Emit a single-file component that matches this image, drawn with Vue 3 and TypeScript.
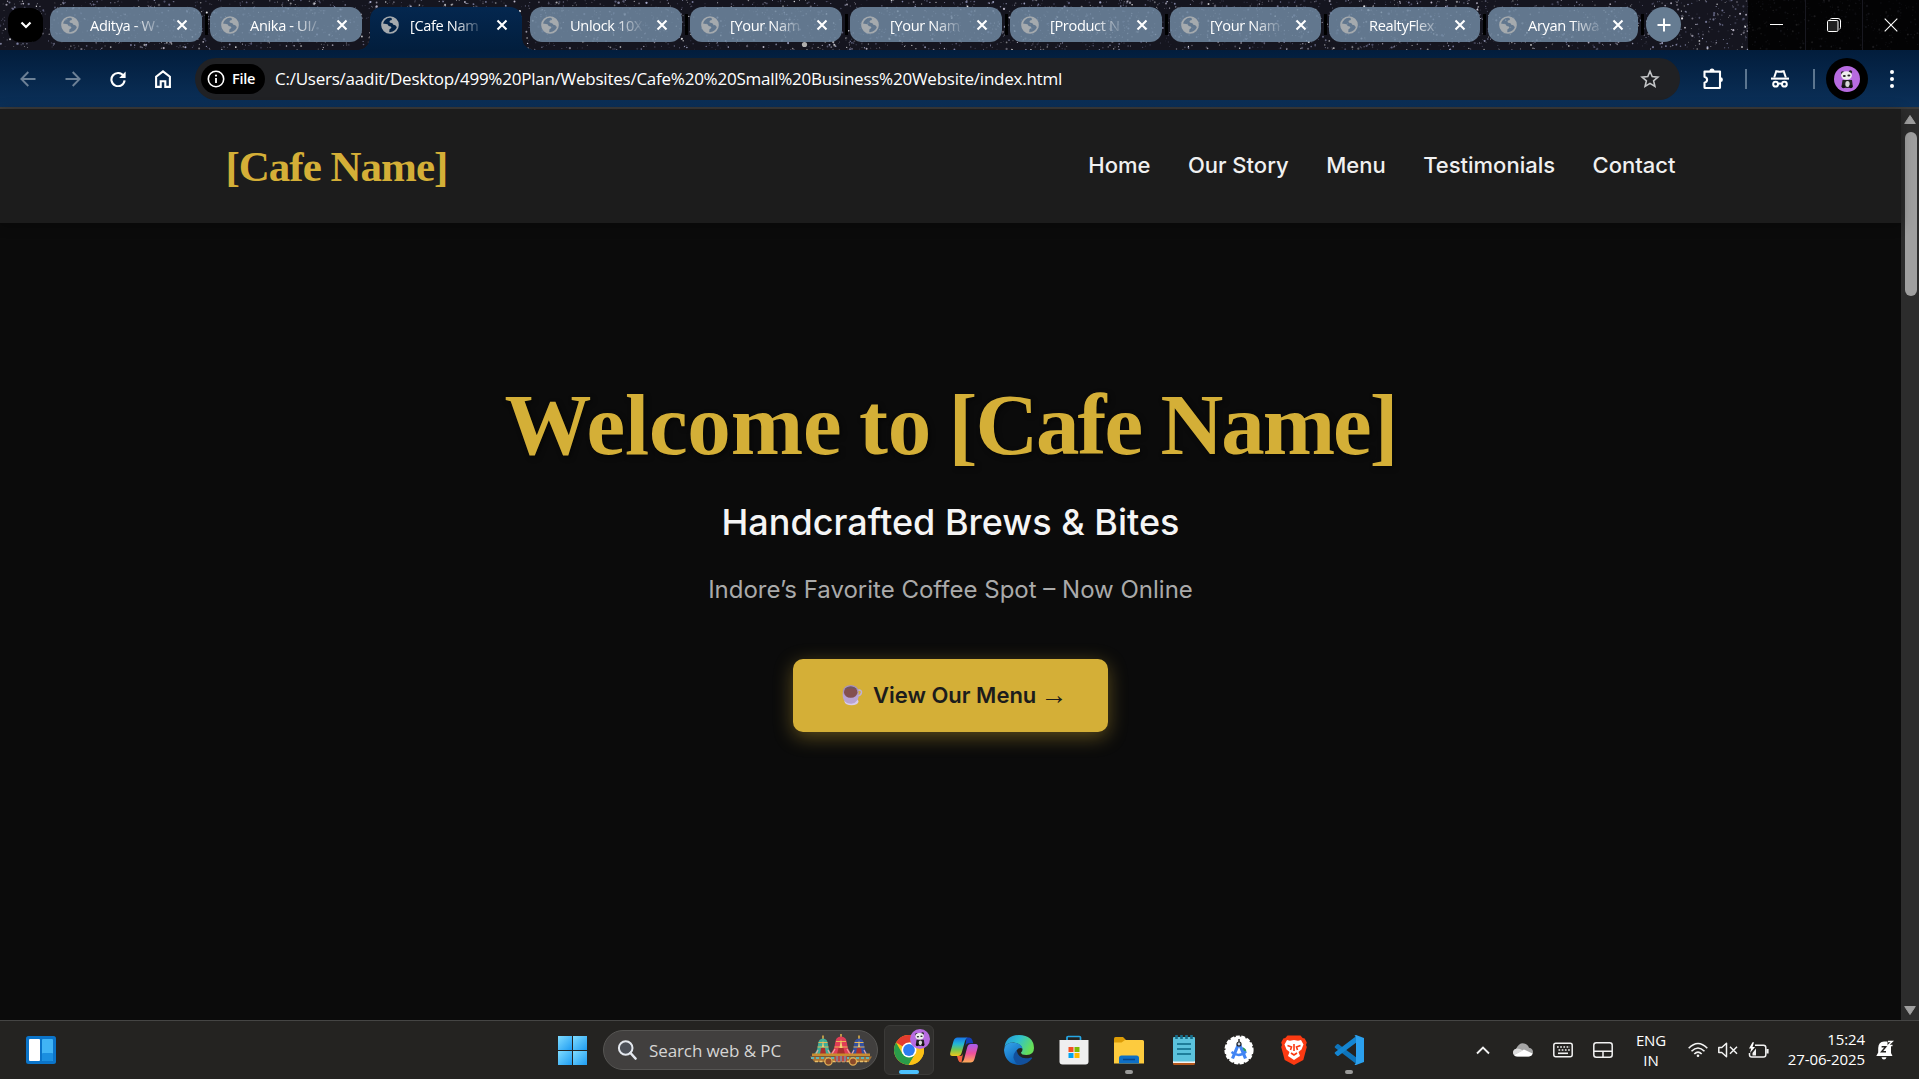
<script setup lang="ts">
interface Tab {
  title: string
  width: number
  active?: boolean
}

interface Star {
  x: number
  y: number
  r: number
  o: number
  c: string
}

const tabs: Tab[] = [
  { title: 'Aditya - W', width: 152 },
  { title: 'Anika - UI/', width: 152 },
  { title: '[Cafe Nam', width: 152, active: true },
  { title: 'Unlock 10X', width: 152 },
  { title: '[Your Nam', width: 152 },
  { title: '[Your Nam', width: 152 },
  { title: '[Product N', width: 152 },
  { title: '[Your Nam', width: 151 },
  { title: 'RealtyFlex', width: 151 },
  { title: 'Aryan Tiwa', width: 150 },
]

const links: string[] = ['Home', 'Our Story', 'Menu', 'Testimonials', 'Contact']

// Small seeded generator so the star field is the same on every load.
function makeStars(count: number): Star[] {
  let seed = 20250627
  const next = (): number => {
    seed = (seed * 1664525 + 1013904223) % 4294967296
    return seed / 4294967296
  }
  const tints = ['#ffffff', '#b9bde0', '#8f93b8', '#d9d4e6', '#77799a']
  const list: Star[] = []
  for (let i = 0; i < count; i++) {
    list.push({
      x: Math.round(next() * 19190) / 10,
      y: Math.round(next() * 500) / 10,
      r: 0.4 + next() * next() * 0.9,
      o: 0.25 + next() * 0.65,
      c: tints[Math.floor(next() * tints.length)],
    })
  }
  return list
}

const stars = makeStars(4200)
</script>

<template>
  <div class="screen">
    <svg width="0" height="0" class="defs">
      <defs>
        <symbol id="globe" viewBox="0 0 18 18">
          <circle cx="9" cy="9" r="8" fill="none" stroke="currentColor" stroke-width="1.7" />
          <path fill="currentColor" d="M1.2 7.6 L5.2 8.1 Q7.4 8.3 7.6 10.1 L9.7 10.4 Q10.7 11 10.2 12.1 Q9.3 13 8.5 13.2 L8.2 16.6 Q2.6 16 1.3 11z" />
          <path fill="currentColor" d="M10.2 1.5 L11 3.2 Q10.6 4.4 9 4.6 L8.4 6 Q9.2 7 10.6 7.1 Q12 7.4 12.3 8.8 L14.4 9.2 Q14.8 10.8 16.6 11 Q18 3.3 10.2 1.5z" />
        </symbol>
        <symbol id="panda" viewBox="0 0 26 26">
          <circle cx="13" cy="13" r="13" fill="#b76be0" />
          <circle cx="8.600" cy="7" r="1.700" fill="#222" />
          <circle cx="16.400" cy="6" r="1.700" fill="#222" />
          <path d="M8.500 14h9.500l.8 6.500q-6 3-11.300 0z" fill="#222" />
          <ellipse cx="13.500" cy="18" rx="2.200" ry="3" fill="#d8d8d8" />
          <ellipse cx="12.500" cy="9.500" rx="5.400" ry="4.200" fill="#eee" />
          <ellipse cx="10.300" cy="10" rx="1.500" ry="1" fill="#222" />
          <ellipse cx="14.900" cy="9.400" rx="1.500" ry="1" fill="#222" />
          <circle cx="9.400" cy="20.500" r="1.800" fill="#111" />
          <circle cx="16.900" cy="20.500" r="1.800" fill="#111" />
        </symbol>
        <linearGradient id="winBlue" x1="0" y1="0" x2="1" y2="1" gradientUnits="objectBoundingBox">
          <stop offset="0" stop-color="#7fdcff" /><stop offset="1" stop-color="#1e9cf2" />
        </linearGradient>
      </defs>
    </svg>

    <!-- Tab strip -->
    <header class="strip">
      <svg class="stars" width="1919" height="50" viewBox="0 0 1919 50">
        <circle v-for="(s, i) in stars" :key="i" :cx="s.x" :cy="s.y" :r="s.r" :fill="s.c" :opacity="s.o" />
        <circle cx="804.5" cy="44.5" r="2.6" fill="#d5d3d0" opacity=".8" />
      </svg>
      <button class="search-tabs">
        <svg width="12" height="8" viewBox="0 0 12 8"><path d="M1.5 1.5 6 6l4.5-4.5" fill="none" stroke="#fff" stroke-width="2.2" /></svg>
      </button>
      <div class="tabs">
        <div v-for="(t, i) in tabs" :key="i" class="tab" :class="{ active: t.active }" :style="{ width: t.width + 'px' }">
          <svg class="fav" width="18" height="18"><use href="#globe" /></svg>
          <span class="tab-title">{{ t.title }}</span>
          <svg class="close" width="12" height="12" viewBox="0 0 12 12"><path d="M1.5 1.5l9 9M10.5 1.5l-9 9" stroke="#fff" stroke-width="2.1" /></svg>
        </div>
      </div>
      <button class="new-tab">
        <svg width="14" height="14" viewBox="0 0 14 14"><path d="M7 .5v13M.5 7h13" stroke="#fff" stroke-width="2" /></svg>
      </button>
      <div class="controls">
        <div class="ctl first"><svg width="13" height="13" viewBox="0 0 13 13"><path d="M0 5.5h13" stroke="#fff" /></svg></div>
        <div class="ctl mid">
          <svg width="14" height="14" viewBox="0 0 14 14" fill="none" stroke="#fff"><path d="M3 1.5q.4-1 1.600-1H11q2.500 0 2.500 2.500v6.500q0 1.300-1 1.600" /><rect x=".5" y="2.500" width="10.500" height="11" rx="1.200" fill="#222" /></svg>
        </div>
        <div class="ctl"><svg width="14" height="14" viewBox="0 0 14 14"><path d="M.7.7l12.600 12.600M13.300.7L.7 13.300" stroke="#fff" stroke-width="1.100" /></svg></div>
      </div>
    </header>

    <!-- Toolbar -->
    <div class="toolbar">
      <div class="navs">
        <svg width="16" height="16" viewBox="0 0 16 16" fill="none" stroke="#6d8196" stroke-width="1.900"><path d="M15.500 8H2M8.300 1L1.400 8l6.900 7" /></svg>
        <svg width="16" height="16" viewBox="0 0 16 16" fill="none" stroke="#6d8196" stroke-width="1.900"><path d="M.5 8H14M7.700 1l6.900 7-6.900 7" /></svg>
        <svg width="16" height="16" viewBox="0 0 16 16"><path d="M13.600 5A6.600 6.600 0 1 0 14.600 9.400" fill="none" stroke="#fff" stroke-width="2.100" /><path d="M15.600.5V6.900H9.200z" fill="#fff" /></svg>
        <svg width="16" height="18" viewBox="0 0 16 18"><path d="M1.100 16.900V6.700L8 1.400l6.900 5.300v10.200h-4.600v-5.600H5.700v5.600z" fill="none" stroke="#fff" stroke-width="2.100" /></svg>
      </div>
      <div class="omnibox">
        <div class="chip">
          <svg width="18" height="18" viewBox="0 0 18 18"><circle cx="9" cy="9" r="7.700" fill="none" stroke="#fff" stroke-width="1.600" /><path d="M9 8v5" stroke="#fff" stroke-width="1.800" /><circle cx="9" cy="5.600" r="1.100" fill="#fff" /></svg>
          <span class="file">File</span>
        </div>
        <span class="url">C:/Users/aadit/Desktop/499%20Plan/Websites/Cafe%20%20Small%20Business%20Website/index.html</span>
        <svg class="star" width="20" height="20" viewBox="0 0 20 20"><path d="M10 2.300l2.200 5.300 5.700.5-4.300 3.700 1.300 5.600L10 14.400l-4.900 3 1.300-5.600L2.100 8.100l5.700-.5z" fill="none" stroke="#c3c5c7" stroke-width="1.600" /></svg>
      </div>
      <div class="tools">
        <svg class="puzzle" width="22" height="22" viewBox="0 0 22 22" fill="none" stroke="#fff" stroke-width="2.100" stroke-linejoin="round"><path d="M2.500 3.600H18v15.800q0 .6-.6.600H3.100q-.6 0-.6-.6v-4.600q2.600-.8 2.600-3t-2.600-3z" /><path d="M7.500 3a2.500 2.500 0 0 1 5 0zM18.500 9.300a2.300 2.300 0 0 1 0 4.800z" fill="#fff" stroke="none" /></svg>
        <i class="bar"></i>
        <svg class="incog" width="20" height="20" viewBox="0 0 20 20" fill="none" stroke="#fff" stroke-width="2"><path d="M4.200 8.500L6.300 2.300q3.700 1 7.400 0l2.100 6.200" /><path d="M1 9.600h18" stroke-width="2.100" /><circle cx="5.600" cy="15.200" r="2.400" /><circle cx="14.400" cy="15.200" r="2.400" /><path d="M8 15q2-1.200 4 0" /></svg>
        <i class="bar"></i>
        <div class="avatar"><svg width="26" height="26"><use href="#panda" /></svg></div>
        <svg class="dots" width="4" height="18" viewBox="0 0 4 18" fill="#fff"><circle cx="2" cy="2" r="2" /><circle cx="2" cy="9" r="2" /><circle cx="2" cy="16" r="2" /></svg>
      </div>
    </div>

    <!-- Web page -->
    <div class="viewport">
      <div class="page">
        <div class="site-head">
          <div class="container">
            <div class="logo">[Cafe Name]</div>
            <nav><a v-for="l in links" :key="l">{{ l }}</a></nav>
          </div>
        </div>
        <section class="hero">
          <h1>Welcome to <span class="brand">[Cafe Name]</span></h1>
          <h2>Handcrafted Brews &amp; Bites</h2>
          <p>Indore’s Favorite Coffee Spot – Now Online</p>
          <a class="cta">
            <svg width="22" height="22" viewBox="0 0 22 22">
              <ellipse cx="10.500" cy="17.500" rx="7" ry="3.800" fill="#d9cdee" />
              <path d="M17 6.200q4-.6 3.500 2.500-.5 3-4 3.300" fill="none" stroke="#bfb0d8" stroke-width="1.500" />
              <path d="M1.800 8q-1.300 11.500 8.500 11.800Q19 18.500 17.500 8z" fill="#b9a3d2" />
              <ellipse cx="9.700" cy="7.200" rx="7.800" ry="6.300" fill="#a891ba" />
              <ellipse cx="9.700" cy="8.200" rx="6.700" ry="5.600" fill="#84504f" />
              <path d="M3.500 5.400a7 5.500 0 0 1 12.400 0q-6-2.500-12.400 0z" fill="#6b5668" />
            </svg>
            <span>View Our Menu</span><span class="arrow">→</span>
          </a>
        </section>
      </div>
      <div class="scroll">
        <svg width="14" height="11" viewBox="0 0 14 11"><path d="M7 1.500L12.300 9.500H1.700z" fill="#9f9f9f" stroke="#9f9f9f" stroke-linejoin="round" /></svg>
        <div class="thumb"></div>
        <svg class="down" width="14" height="11" viewBox="0 0 14 11"><path d="M7 9.500L12.300 1.500H1.700z" fill="#9f9f9f" stroke="#9f9f9f" stroke-linejoin="round" /></svg>
      </div>
    </div>

    <!-- Taskbar -->
    <footer class="taskbar">
      <svg class="widgets" width="30" height="28" viewBox="0 0 30 28">
        <rect width="30" height="28" rx="2.500" fill="#0b74c9" />
        <rect x="3" y="3" width="11" height="22" rx="1" fill="#fff" />
        <rect x="16" y="3" width="11" height="22" rx="1" fill="#41b4f5" />
        <rect x="16" y="17" width="11" height="8" rx="1" fill="#1b8fe0" />
      </svg>

      <div class="center">
        <svg class="win" width="29" height="29" viewBox="0 0 29 29"><g fill="url(#winBlue)"><rect width="14" height="14" /><rect x="15" width="14" height="14" /><rect y="15" width="14" height="14" /><rect x="15" y="15" width="14" height="14" /></g></svg>
        <div class="search">
          <svg width="20" height="20" viewBox="0 0 20 20" fill="none" stroke="#e4e8ee"><circle cx="8.700" cy="8" r="6.800" fill="#4c5058" stroke-width="2" /><path d="M13.500 13l5 5.500" stroke-width="2.600" stroke-linecap="round" /></svg>
          <span class="ph">Search web &amp; PC</span>
          <svg class="rath" width="62" height="32" viewBox="0 0 62 32">
            <path d="M13 1.500v4M31 0v4M49 1.500v4" stroke="#e2b54c" stroke-width="1.500" />
            <path d="M4 20Q7.500 17 8 10.500 8.500 4.500 13 4.500T18 10.500Q18.500 17 22 20z" fill="#3fae98" />
            <path d="M40 20Q43.500 17 44 10.500 44.500 4.500 49 4.500T54 10.500Q54.500 17 58 20z" fill="#34509f" />
            <path d="M20 20Q24.500 16 25 9.500 25.500 2.500 31 2.500T37 9.500Q37.500 16 42 20z" fill="#df3d56" />
            <path d="M8.500 8.500h9M7.500 13h11M26 7.500h10M24.500 13h13M44.500 8.500h9M43.500 13h11" stroke="#e7b654" stroke-width="1.200" />
            <path d="M12 13l1-7 1 7zM29.500 14L31 5l1.500 9zM48 13l1-7 1 7z" fill="#f2cf72" />
            <path d="M11 14h4l1 6h-6zM28.500 14h5l1.500 6h-8zM47 14h4l1 6h-6z" fill="#a8302e" />
            <path d="M8 16l-2 4M18 16l2 4M25 15l-3 5M37 15l3 5M44 16l-2 4M54 16l2 4" stroke="#e9a7a0" stroke-width="1.200" />
            <rect x="2" y="19.500" width="58" height="2.500" fill="#c98b2f" />
            <path d="M0 22.500h62l-3.500 5.500H4.500z" fill="#a87536" />
            <path d="M1 24h60" stroke="#62b4b4" stroke-width="1.800" stroke-dasharray="3 2" />
            <path d="M5 27.500h52" stroke="#eac06a" stroke-width="1.500" stroke-dasharray="3 1.500" />
            <g fill="#8b4a2a" stroke="#dfac54" stroke-width="1.300"><circle cx="18.500" cy="27.500" r="3.600" /><circle cx="43" cy="27.500" r="3.600" /></g>
            <path d="M25 22h12v5.500H25z" fill="#b94744" /><path d="M27 22v5.500M31 22v5.500M35 22v5.500" stroke="#59b7cd" />
          </svg>
        </div>
        <div class="tile">
          <svg class="chrome" width="30" height="30" viewBox="0 0 30 30">
            <circle cx="15" cy="15" r="15" fill="#fbc116" />
            <path d="M15 15L2 7.500A15 15 0 0 1 28 7.500L15 7.600z" fill="#e33b2e" />
            <path d="M2 7.500A15 15 0 0 0 14.600 30L21.400 18.600 15 15 8.500 18.700z" fill="#2a9c4a" />
            <path d="M15 7.500H28A15 15 0 0 1 14.600 30l6.900-11.200z" fill="#fbc116" />
            <circle cx="15" cy="15" r="7.500" fill="#fff" /><circle cx="15" cy="15" r="5.900" fill="#2d7cf0" />
          </svg>
          <svg class="badge" width="20" height="20"><use href="#panda" /></svg>
          <i class="run on"></i>
        </div>
        <div class="app">
          <svg width="30" height="30" viewBox="0 0 30 30">
            <defs>
              <linearGradient id="cpA" x1="0" y1="0" x2="0" y2="1"><stop offset="0" stop-color="#1675e8" /><stop offset=".35" stop-color="#22b6d7" /><stop offset=".65" stop-color="#70c654" /><stop offset="1" stop-color="#f0c51a" /></linearGradient>
              <linearGradient id="cpB" x1="0" y1="0" x2="0" y2="1"><stop offset="0" stop-color="#a45df0" /><stop offset=".5" stop-color="#ed4f9c" /><stop offset="1" stop-color="#ffad55" /></linearGradient>
            </defs>
            <path d="M17.500 2.500h2.800q2.200 0 3 2.500l1 3.300h-5q-2 0-2.800 2.600z" fill="#123fb6" />
            <path d="M8.500 2.500h10q-1.800 1-2.500 3.600l-3.400 12q-.8 2.900-3.600 2.900H3.500Q.4 21 1.300 17.500L4.500 6q1-3.500 4-3.500z" fill="url(#cpA)" />
            <path d="M12.500 27.500q-2.600 0-3.400-2.500l-1.100-4h3.500q1.900 0 2.500-2.600z" fill="#f4613d" />
            <path d="M21.500 27.500h-9q2-1 2.600-3.600l3.200-12q.8-2.900 3.600-2.900h4.700q3 0 2.100 3.500L25.500 24q-1 3.500-4 3.500z" fill="url(#cpB)" />
          </svg>
        </div>
        <div class="app">
          <svg width="30" height="30" viewBox="0 0 30 30">
            <defs>
              <linearGradient id="edA" x1="0" y1="0" x2="1" y2=".4"><stop offset="0" stop-color="#2494dc" /><stop offset=".5" stop-color="#2fc1cf" /><stop offset="1" stop-color="#66df58" /></linearGradient>
              <linearGradient id="edB" x1="0" y1="0" x2=".6" y2="1"><stop offset="0" stop-color="#36a8ec" /><stop offset="1" stop-color="#0b61b8" /></linearGradient>
            </defs>
            <path d="M.5 12Q2 0 15 0q14.500.5 15 13 0 7-7.500 7-5.500 0-5.500-2.500 1.500-1 1.500-3Q18 9 9.500 7.500 3 7.500.5 12z" fill="url(#edA)" />
            <path d="M0 15Q0 9 7.500 7.500q10 0 11 6-3.500-1.500-6 2-2 8 6.500 12-1.500 2.500-4 2.500Q1 29 0 15z" fill="url(#edB)" />
            <path d="M12.500 15Q9 19 9.500 23q2.500 7 6 7Q23 30 28 23.500q.5-1.500-1-1-12 3.500-14.500-7.500z" fill="#12509c" />
          </svg>
        </div>
        <div class="app">
          <svg width="30" height="30" viewBox="0 0 30 30">
            <path d="M8 6V2.600Q8 1.500 9.100 1.500h11.300q1.100 0 1.100 1.100V6" fill="none" stroke="#26a7e5" stroke-width="1.700" />
            <path d="M.5 5h29v21.500q0 3-3 3h-23q-3 0-3-3z" fill="#efefef" />
            <path d="M9.500 12h5v5h-5z" fill="#f25022" /><path d="M15.500 12h5v5h-5z" fill="#7fba00" /><path d="M9.500 18h5v5h-5z" fill="#00a4ef" /><path d="M15.500 18h5v5h-5z" fill="#ffb900" />
          </svg>
        </div>
        <div class="app">
          <svg width="30" height="30" viewBox="0 0 30 30">
            <path d="M0 3.500Q0 2 1.500 2H9l3.500 3.500L9 8H0z" fill="#dc9c06" />
            <path d="M0 7.500h7.500L11 5h17.500Q30 5 30 6.500V28.500H0z" fill="#fdcb3e" />
            <path d="M5 28.500V23q0-2.500 2.500-2.500h15Q25 20.500 25 23v5.500z" fill="#0e6fc5" />
            <path d="M9 24.500h12" stroke="#07458c" stroke-width="1.500" />
          </svg>
          <i class="run"></i>
        </div>
        <div class="app">
          <svg width="30" height="30" viewBox="0 0 30 30">
            <rect x="4" y="23" width="22" height="7" rx="1.500" fill="#b5571c" />
            <rect x="4" y="20" width="22" height="8" fill="#f2f2f2" />
            <rect x="4" y="2" width="22" height="24.500" rx="1" fill="#5bc2dc" />
            <path d="M8 9h14M8 14h14M8 19h14" stroke="#0b6884" stroke-width="1.700" />
            <path d="M7.500 0v4M12.500 0v4M17.500 0v4M22.500 0v4" stroke="#176f8c" stroke-width="2.600" />
          </svg>
        </div>
        <div class="app">
          <svg width="30" height="30" viewBox="0 0 30 30">
            <circle cx="15" cy="15" r="13.600" fill="#fff" stroke="#fff" stroke-width="2" stroke-dasharray="4 1.500" />
            <path d="M18.500 12q5 2 3.500 6h-4z" fill="#2f9d57" />
            <path d="M15 8L8.500 23.500M15 8l6.500 15.500" stroke="#4285f4" stroke-width="3.200" />
            <path d="M7.500 17q7.500 6 14.500-.5" fill="none" stroke="#4285f4" stroke-width="2.400" />
            <circle cx="15" cy="9" r="2" fill="#ccd4df" stroke="#222" stroke-width="1.200" /><path d="M15 4v3" stroke="#333" stroke-width="1.500" />
          </svg>
        </div>
        <div class="app">
          <svg width="30" height="30" viewBox="0 0 30 30">
            <path d="M8.500.5h13l2.200 2.500 2 .5 2.100 4-.8 2.500.8 2-3.500 13L15 30 5.700 25 2.200 12l.8-2-.8-2.500 2.100-4 2-.5z" fill="#fb3a12" />
            <path d="M15 5l4 .7 3-.7 2.500 4.500-2 5-3 2.500 1.500 4L15 25l-6-4 1.500-4-3-2.500-2-5L8 5l3 .7z" fill="#fff" />
            <path d="M8.500 10.500l4 1.500-1 3M21.500 10.500l-4 1.500 1 3M15 9v7M12 18l3 2 3-2" fill="none" stroke="#fb3a12" stroke-width="1.600" />
          </svg>
        </div>
        <div class="app">
          <svg width="30" height="30" viewBox="0 0 30 30">
            <path d="M1 11.300l2-2q.8-.6 1.600 0L23 23v6.500L1 12.700q-.8-.7 0-1.400z" fill="#0e74bb" />
            <path d="M1 18.700l2 2q.8.600 1.600 0L23 7V.5L1 17.300q-.8.700 0 1.400z" fill="#1485d1" />
            <path d="M22 0l8 3v24l-8 3q-.8 0-1.500-.6L22 28V2L20.500.6Q21.200 0 22 0z" fill="#2ba0ee" />
          </svg>
          <i class="run"></i>
        </div>
      </div>

      <div class="tray">
        <svg class="chev" width="14" height="9" viewBox="0 0 14 9"><path d="M1 7.500l6-6 6 6" fill="none" stroke="#f2f2f2" stroke-width="1.900" /></svg>
        <svg class="cloud" width="20" height="14" viewBox="0 0 20 14"><path d="M3 6Q6-.5 11 .4q4 .6 5 4.400 4 .8 4 4.200 0 4-4.500 4.500H5Q.3 13.300 0 9.500 0 7 3 6z" fill="#a5a5a5" /><path d="M1 12L11 6.500 19.500 10.500q-.8 3-4 3H4.500Q2 13.500 1 12z" fill="#fff" /><path d="M0 9.500q.2-3.500 4-4 3 0 6 2L1.300 12Q0 11 0 9.500z" fill="#dcdcdc" /></svg>
        <svg class="kbd" width="20" height="16" viewBox="0 0 20 16" fill="none" stroke="#f2f2f2"><rect x=".8" y="1.300" width="18.400" height="13.400" rx="2" stroke-width="1.500" /><path d="M4 5h13M5.500 8h12" stroke-width="1.700" stroke-dasharray="1.700 1.500" /><path d="M5 11.300h10" stroke-width="1.600" /></svg>
        <svg class="pad" width="20" height="16" viewBox="0 0 20 16" fill="none" stroke="#f2f2f2" stroke-width="1.500"><rect x=".8" y=".8" width="18.400" height="14.400" rx="2.500" /><path d="M1 9.300h18M10 9.300V15" /></svg>
        <div class="lang"><span>ENG</span><span>IN</span></div>
        <svg class="wifi" width="20" height="16" viewBox="0 0 20 16" fill="none" stroke="#f2f2f2" stroke-width="1.600"><path d="M.7 6.300q9.300-9.500 18.600 0M3.500 9.300q6.500-6.700 13 0M6.300 12q3.700-3.700 7.400 0" /><circle cx="10" cy="13.800" r="1.300" fill="#f2f2f2" stroke="none" /></svg>
        <svg class="vol" width="20" height="16" viewBox="0 0 20 16" fill="none" stroke="#f2f2f2" stroke-width="1.500"><path d="M.8 5.500h3L8.500 1.300v13.400L3.800 10.500h-3z" stroke-linejoin="round" /><path d="M12 4.800l7 7M19 4.800l-7 7" /></svg>
        <svg class="bat" width="21" height="17" viewBox="0 0 21 17" fill="none" stroke="#f2f2f2" stroke-width="1.500"><path d="M7 3.300h8.500q2.300 0 2.300 2.300v7.200q0 2.300-2.300 2.300H3.800q-2.300 0-2.300-2.300V11" /><path d="M19.500 7v4.500" stroke-width="2.200" /><path d="M4.500 13.500V11L8 6.500V13.500z" fill="#f2f2f2" stroke="none" /><path d="M4.500.2L1 6.500h2.200L2 11l5-6H4.500L6 .2z" fill="#fff" stroke="none" /></svg>
        <div class="clock"><span>15:24</span><span>27-06-2025</span></div>
        <svg class="bell" width="18" height="20" viewBox="0 0 18 20"><path d="M2.200 8Q2.500 1.800 8 1.500h3.500V6H15v7l1.500 3H.3l1.900-3.500z" fill="#fff" /><path d="M5.500 17.300h5Q10 19.500 8 19.500t-2.500-2.200z" fill="#fff" /><path d="M5.600 6.800h4.200l-4.200 5h4.400" fill="none" stroke="#242321" stroke-width="1.500" /><path d="M12 1.500h4.300l-4.300 4h4.500" fill="none" stroke="#fff" stroke-width="1.400" /></svg>
      </div>
    </footer>
  </div>
</template>

<style>
html,
body {
  background: #0b0b0b;
  overflow: hidden;
}
</style>

<style scoped>
* {
  box-sizing: border-box;
}
svg {
  display: block;
  flex: none;
}
.defs {
  position: absolute;
}
.screen {
  width: 1919px;
  height: 1079px;
  display: flex;
  flex-direction: column;
  overflow: hidden;
  color: #fff;
  font-family: 'Open Sans', 'Noto Sans', sans-serif;
}
.strip {
  position: relative;
  height: 50px;
  display: flex;
  align-items: flex-start;
  background: #15151f;
}
.stars {
  position: absolute;
  left: 0;
  top: 0;
}
button {
  border: 0;
  padding: 0;
  display: flex;
  align-items: center;
  justify-content: center;
}
.search-tabs {
  position: relative;
  width: 35px;
  height: 34px;
  margin: 8px 7px 0 8px;
  border-radius: 12px;
  background: #000;
}
.tabs {
  display: flex;
  gap: 8px;
}
.tab {
  position: relative;
  flex: none;
  height: 35px;
  margin-top: 7px;
  padding: 0 14px 0 11px;
  display: flex;
  align-items: center;
  border-radius: 12px;
  background: rgba(114, 140, 165, 0.83);
}
.tab::after {
  content: '';
  position: absolute;
  right: -6px;
  top: 7px;
  width: 3px;
  height: 21px;
  background: #000;
}
.tab.active {
  height: 43px;
  padding-bottom: 8px;
  border-radius: 12px 12px 0 0;
  background: linear-gradient(#04274f, #021e3d);
}
.tab.active::before,
.tab.active::after {
  content: '';
  position: absolute;
  top: auto;
  bottom: 0;
  width: 12px;
  height: 12px;
}
.tab.active::before {
  left: -12px;
  background: radial-gradient(circle at 0 0, transparent 11.5px, #021e3d 12px);
}
.tab.active::after {
  right: -12px;
  background: radial-gradient(circle at 100% 0, transparent 11.5px, #021e3d 12px);
}
.tab:nth-child(2)::after {
  display: none;
}
.fav {
  color: #a5aaae;
}
.tab-title {
  width: 76px;
  margin-left: 11px;
  white-space: nowrap;
  font-size: 14.6px;
  letter-spacing: -0.35px;
  line-height: 22px;
  -webkit-mask-image: linear-gradient(to right, #000 58%, transparent 98%);
  mask-image: linear-gradient(to right, #000 58%, transparent 98%);
}
.close {
  margin-left: auto;
}
.new-tab {
  position: relative;
  width: 35px;
  height: 35px;
  margin: 7px 0 0 8px;
  border-radius: 50%;
  background: #667c92;
}
.controls {
  position: relative;
  margin-left: auto;
  height: 50px;
  display: flex;
  background: rgba(0, 0, 0, 0.86);
}
.ctl {
  width: 56px;
  display: flex;
  align-items: center;
  justify-content: center;
}
.ctl.first {
  width: 57px;
}
.ctl.mid {
  width: 58px;
  border: solid #181820;
  border-width: 0 1px;
}

.toolbar {
  height: 59px;
  display: flex;
  align-items: center;
  background: linear-gradient(#021d3c, #0b3059);
  border-bottom: 2px solid #3b3b3a;
}
.navs {
  width: 195px;
  padding-left: 19.5px;
  display: flex;
  align-items: center;
  gap: 29px;
}
.omnibox {
  width: 1485px;
  height: 42px;
  padding: 0 20px 0 6px;
  display: flex;
  align-items: center;
  border-radius: 21px;
  background: #202124;
}
.chip {
  width: 64px;
  height: 30px;
  padding-left: 6px;
  display: flex;
  align-items: center;
  border-radius: 15px;
  background: #000;
}
.file {
  margin-left: 7px;
  font-size: 14.5px;
  font-weight: 600;
  letter-spacing: -0.3px;
}
.url {
  margin-left: 10px;
  font-size: 17px;
  letter-spacing: -0.24px;
  white-space: nowrap;
}
.star {
  margin-left: auto;
}
.tools {
  flex: 1;
  display: flex;
  align-items: center;
}
.puzzle {
  margin-left: 22px;
}
.bar {
  width: 2px;
  height: 20px;
  background: #5c7690;
}
.tools .bar {
  margin-left: 21px;
}
.incog {
  margin-left: 23px;
}
.tools .incog + .bar {
  margin-left: 23px;
}
.avatar {
  width: 42px;
  height: 42px;
  margin-left: 11px;
  display: flex;
  align-items: center;
  justify-content: center;
  border-radius: 50%;
  background: #000;
}
.dots {
  margin-left: 22px;
}

.viewport {
  height: 911px;
  display: flex;
}
.page {
  width: 1901px;
  background: #0b0b0b;
  font-family: Inter, sans-serif;
}
.site-head {
  position: relative;
  height: 114px;
  background: #1c1c1c;
  box-shadow: 0 2px 12px rgba(0, 0, 0, 0.3);
}
.container {
  width: 1500px;
  height: 100%;
  margin: 0 auto;
  padding: 0 25px;
  display: flex;
  align-items: center;
  justify-content: space-between;
}
.logo {
  color: #d4af37;
  font-family: 'Liberation Serif', serif;
  font-weight: 700;
  font-size: 43px;
  line-height: 50px;
  letter-spacing: -1px;
  padding-top: 2px;
  white-space: nowrap;
}
nav {
  display: flex;
  gap: 37.5px;
  padding-bottom: 2px;
  font-size: 22px;
  font-weight: 500;
  color: #f0f0f0;
}
.hero {
  display: flex;
  flex-direction: column;
  align-items: center;
  padding-top: 148px;
}
h1,
h2,
p {
  margin: 0;
  white-space: nowrap;
}
h1 {
  height: 108px;
  line-height: 108px;
  color: #d4af37;
  font-family: 'Liberation Serif', serif;
  font-weight: 700;
  font-size: 87px;
  letter-spacing: -0.2px;
  word-spacing: -4px;
  text-shadow: 2px 2px 5px rgba(0, 0, 0, 0.5);
}
.brand {
  letter-spacing: -2.1px;
  word-spacing: 0;
}
h2 {
  margin-top: 14px;
  height: 58px;
  line-height: 58px;
  font-size: 36px;
  font-weight: 500;
  color: #f5f5f5;
}
p {
  margin-top: 19px;
  height: 40px;
  line-height: 40px;
  font-size: 24px;
  color: #aaa;
}
.cta {
  width: 315px;
  height: 73px;
  margin-top: 49px;
  padding: 0 0 2px 48px;
  display: flex;
  align-items: center;
  border-radius: 10px;
  background: #d4af37;
  box-shadow: 0 5px 19px rgba(212, 175, 55, 0.4);
  color: #1c1c1c;
  font-size: 22px;
  font-weight: 600;
  white-space: nowrap;
}
.cta span {
  margin-left: 10px;
}
.cta .arrow {
  margin-left: 4px;
  font-family: 'Liberation Serif', serif;
  font-size: 27px;
  line-height: 22px;
  font-weight: 400;
}
.scroll {
  width: 18px;
  padding: 5px 0 4px 2px;
  display: flex;
  flex-direction: column;
  background: #2c2c2c;
}
.thumb {
  width: 12px;
  height: 164px;
  margin: 7px 0 0 2px;
  border-radius: 6px;
  background: #9f9f9f;
}
.down {
  margin-top: auto;
}

.taskbar {
  height: 59px;
  display: flex;
  align-items: center;
  border-top: 1px solid #454544;
  background: #242321;
}
.widgets {
  margin-left: 26px;
}
.center {
  margin-left: 502px;
  display: flex;
  align-items: center;
}
.search {
  width: 275px;
  height: 40px;
  margin: 0 6px 0 16px;
  padding: 0 5px 0 13px;
  display: flex;
  align-items: center;
  border: 1px solid #565553;
  border-radius: 20px;
  background: #413f3e;
}
.ph {
  margin-left: 12px;
  font-size: 17px;
  letter-spacing: -0.1px;
  color: #d6d5d4;
  white-space: nowrap;
}
.rath {
  margin-left: auto;
}
.tile {
  position: relative;
  width: 50px;
  height: 50px;
  display: flex;
  align-items: center;
  justify-content: center;
  border: 1px solid #3b3a38;
  border-radius: 6px;
  background: #302f2d;
}
.badge {
  position: absolute;
  left: 25px;
  top: 3px;
}
.app {
  position: relative;
  width: 30px;
  height: 50px;
  margin-left: 25px;
  display: flex;
  align-items: center;
}
.tile + .app {
  margin-left: 15px;
}
.run {
  position: absolute;
  left: 11px;
  bottom: 1px;
  width: 8px;
  height: 4px;
  border-radius: 2px;
  background: #9a9a99;
}
.run.on {
  left: 14px;
  bottom: 0;
  width: 20px;
  background: #4cc2ff;
}
.tray {
  margin-left: 112px;
  display: flex;
  align-items: center;
  font-size: 15px;
  line-height: 20px;
}
.cloud {
  margin-left: 23px;
}
.kbd {
  margin-left: 20px;
}
.pad {
  margin-left: 20px;
}
.lang,
.clock {
  display: flex;
  flex-direction: column;
  align-items: center;
  letter-spacing: -0.1px;
}
.lang {
  width: 40px;
  margin-left: 18px;
}
.wifi {
  margin-left: 17px;
}
.vol {
  margin-left: 10px;
}
.bat {
  margin-left: 10px;
}
.clock {
  width: 90px;
  margin-left: 6px;
  padding-bottom: 2px;
  align-items: flex-end;
}
.bell {
  margin-left: 11px;
}
</style>
